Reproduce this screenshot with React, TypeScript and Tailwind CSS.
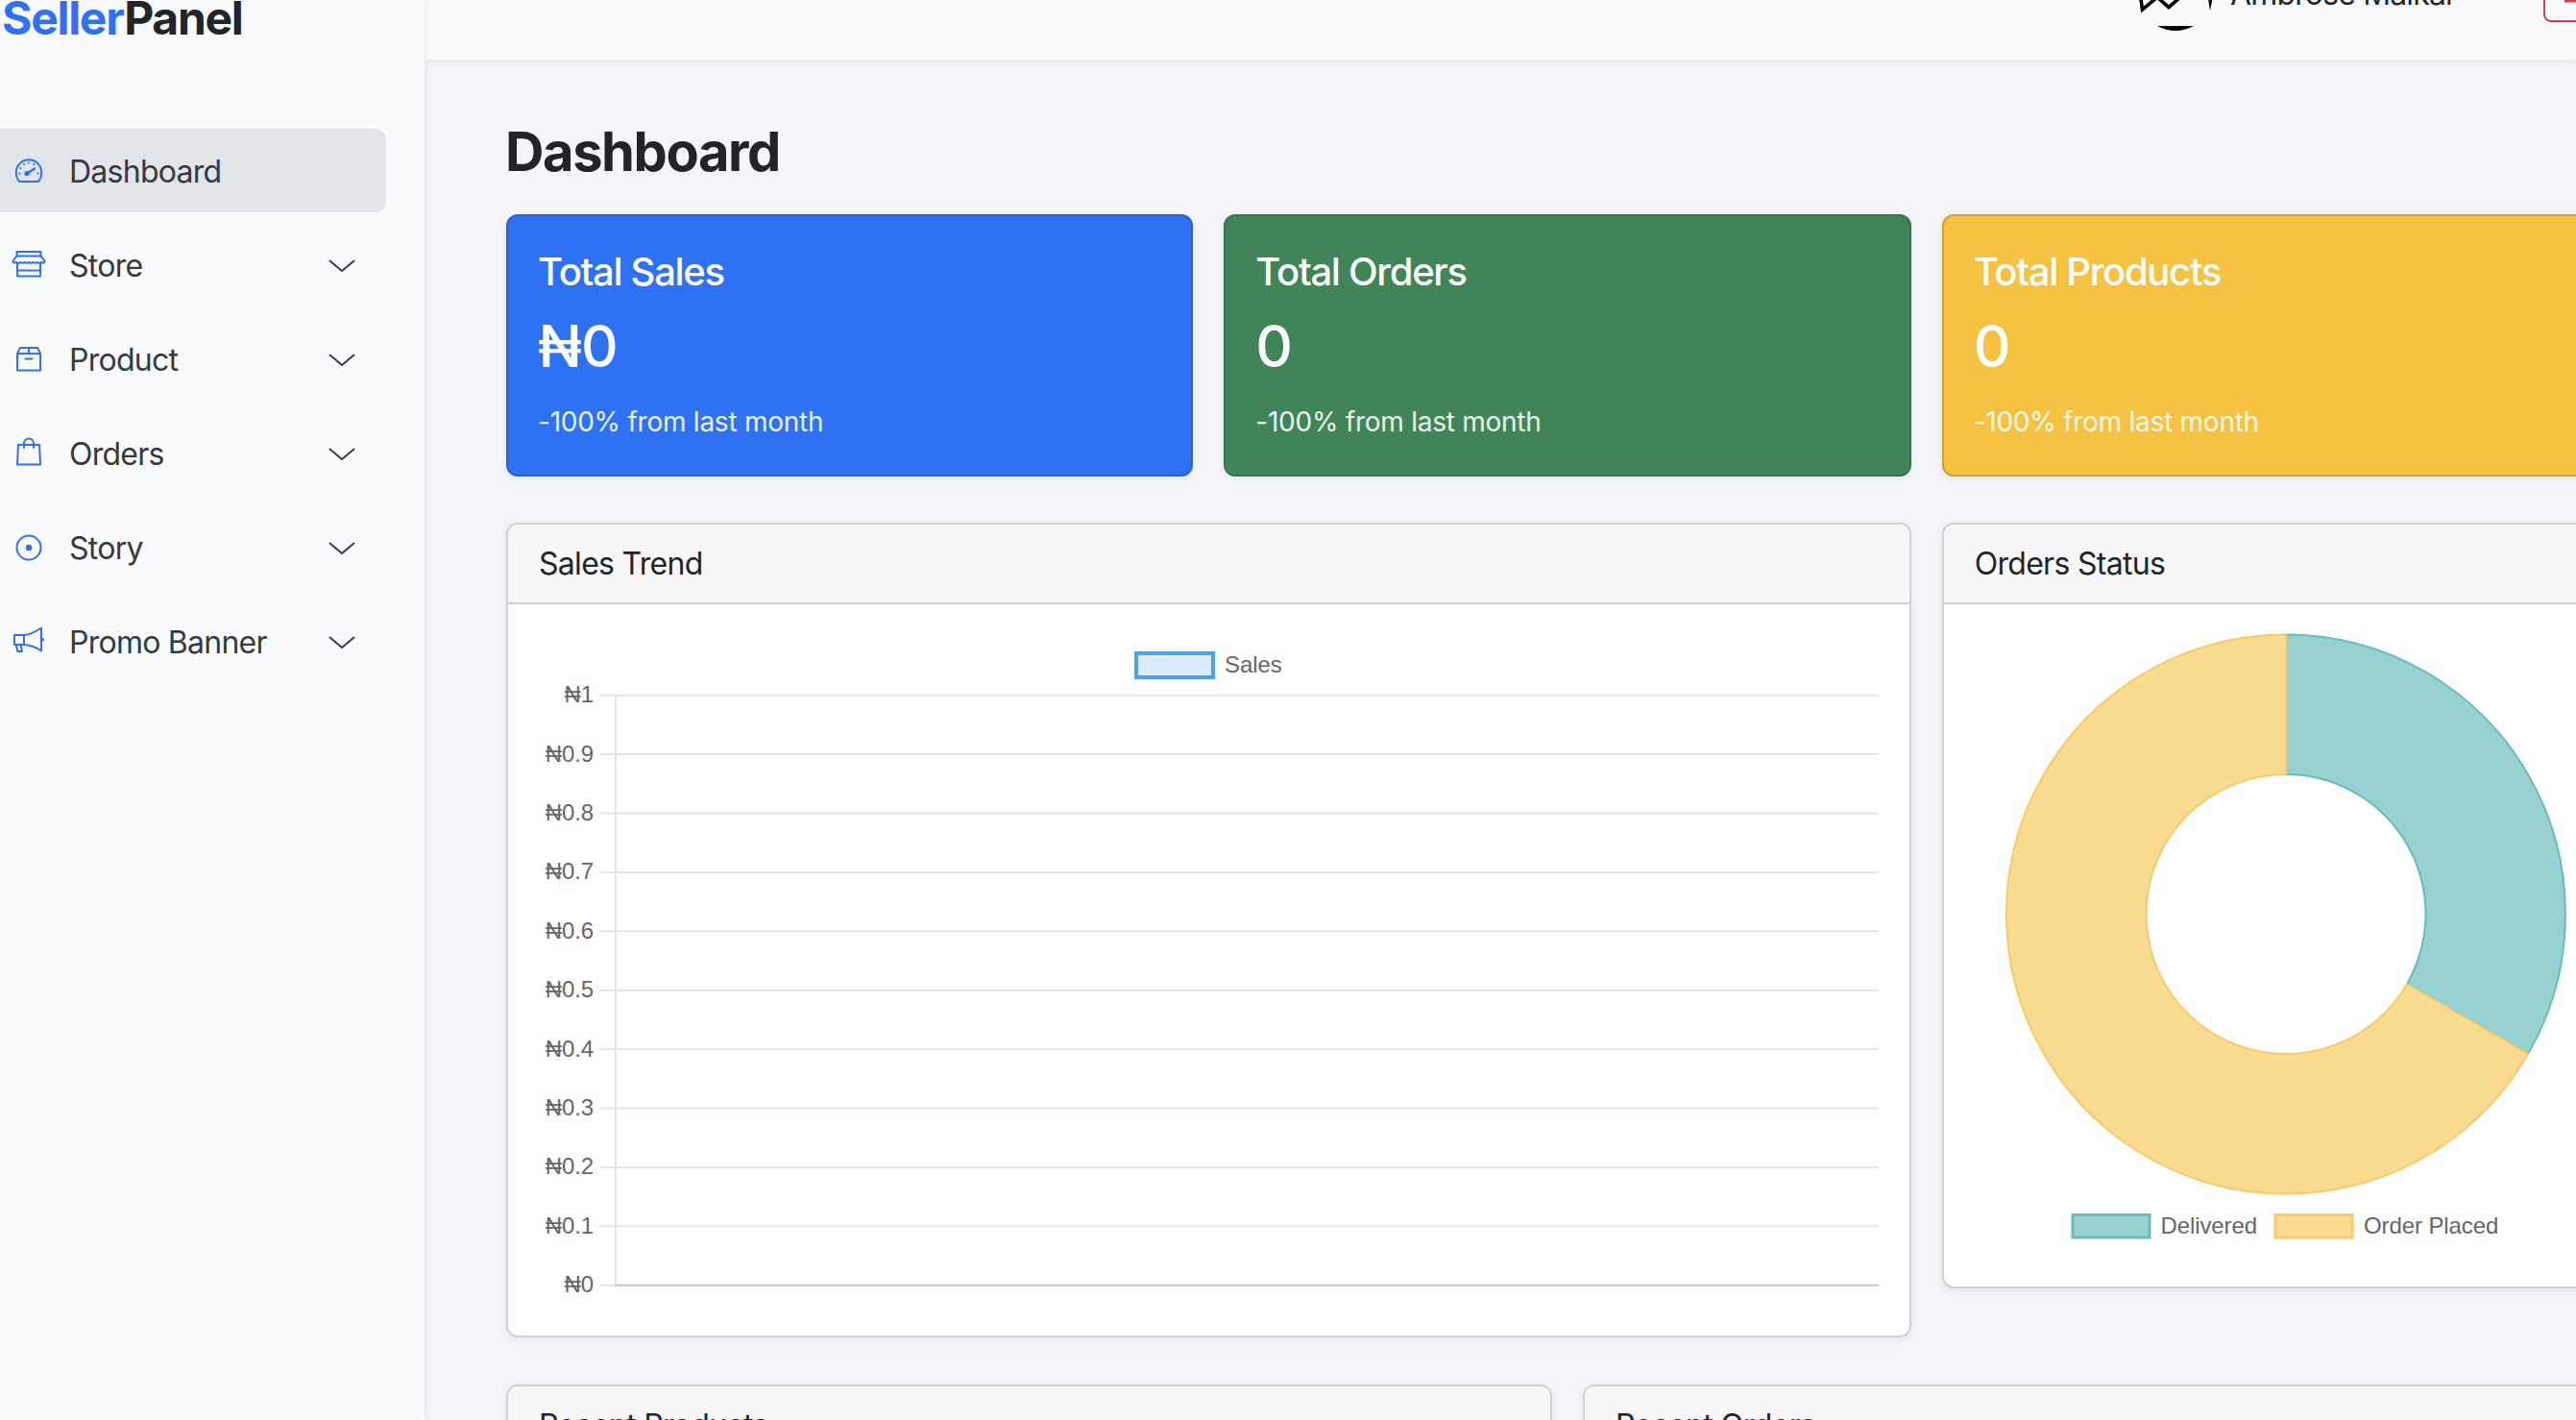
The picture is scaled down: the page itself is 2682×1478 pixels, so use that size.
import React from "react";

const S = { fill: "none", stroke: "#2f71f4", strokeWidth: 2, strokeLinejoin: "round" as const, strokeLinecap: "round" as const };

function Icon({ children }: { children: React.ReactNode }) {
  return (
    <svg viewBox="0 0 40 40" className="w-10 h-10 shrink-0 ml-[10px] mr-[22px]">
      {children}
    </svg>
  );
}

const GaugeIcon = () => (
  <Icon>
    <path {...S} d="M10.5 31 C7.8 28.5 6.8 25 6.8 21.5 A13.2 13.2 0 0 1 33.2 21.5 C33.2 25 32.2 28.5 29.5 31 Z" />
    <path {...S} strokeWidth={2.4} d="M18 22.5 L26 17.5" />
    <circle cx="18" cy="22.5" r="2.6" fill="#2f71f4" />
    {[[10.5, 22.5], [11.5, 17], [15, 13], [20, 11.5], [25.5, 13], [29.5, 22.5]].map(([x, y], i) => (
      <circle key={i} cx={x} cy={y} r="1.1" fill="#2f71f4" />
    ))}
  </Icon>
);
const StoreIcon = () => (
  <Icon>
    <path {...S} d="M7.5 11 V6 H32.5 V11" />
    <path {...S} d="M7.5 10.5 H32.5 L36.5 15.5 C36.5 18 34 18 33 16.8 C32 18 29.5 18 28.5 16.8 C27.5 18 25 18 24.2 16.8 C23.2 18 21 18 20 16.8 C19 18 16.8 18 15.8 16.8 C15 18 12.5 18 11.5 16.8 C10.5 18 8 18 7 16.8 C6 18 3.5 18 3.5 15.5 Z" />
    <path {...S} d="M8 18 V31.5 H32 V18 M8 25.5 H32" />
  </Icon>
);
const BoxIcon = () => (
  <Icon>
    <path {...S} d="M8 14 L11 8 H29 L32 14 V31.5 H8 Z M8 14 H32 M20 8 V14" />
    <path {...S} strokeWidth={2.2} d="M16.5 19.5 H23.5" />
  </Icon>
);
const BagIcon = () => (
  <Icon>
    <path {...S} d="M9 11 H31 L32 31.5 H8 Z" />
    <path {...S} d="M15 14 V9.5 A5 5 0 0 1 25 9.5 V14" />
  </Icon>
);
const RecordIcon = () => (
  <Icon>
    <circle {...S} cx="20" cy="20" r="12.5" />
    <circle cx="20" cy="20" r="3.2" fill="#2f71f4" />
  </Icon>
);
const MegaphoneIcon = () => (
  <Icon>
    <path {...S} d="M5 13 H15 V23 H5 Z" />
    <path {...S} d="M15 13 C22 12.5 28 9 33 5.5 V29.5 C28 26 22 23.5 15 23" />
    <circle cx="34.3" cy="17.8" r="1.8" fill="#2f71f4" />
    <path {...S} d="M6.5 23 L8.5 30 H13 L11.5 23" />
  </Icon>
);

const Chevron = () => (
  <svg viewBox="0 0 28 14" className="w-[28px] h-[14px] shrink-0">
    <path d="M1.5 1.5 L14 12 L26.5 1.5" fill="none" stroke="#343a40" strokeWidth="1.9" strokeLinecap="round" strokeLinejoin="round" />
  </svg>
);

const NAV: { label: string; icon: React.ReactNode; chevron: boolean }[] = [
  { label: "Dashboard", icon: <GaugeIcon />, chevron: false },
  { label: "Store", icon: <StoreIcon />, chevron: true },
  { label: "Product", icon: <BoxIcon />, chevron: true },
  { label: "Orders", icon: <BagIcon />, chevron: true },
  { label: "Story", icon: <RecordIcon />, chevron: true },
  { label: "Promo Banner", icon: <MegaphoneIcon />, chevron: true },
];

function Sidebar() {
  return (
    <aside className="w-[442px] shrink-0 h-full bg-[#f9fafc] shadow-[2px_0_6px_rgba(0,0,0,0.05)] relative z-10">
      <div className="-mt-[10px] pl-[2px] h-[144px] text-[48px] font-bold leading-[58px] tracking-[-1.3px] text-[#212529]">
        <span className="text-[#2f71f4]">Seller</span>Panel
      </div>
      <nav className="flex flex-col gap-[11px] w-[402px]">
        {NAV.map((n, i) => (
          <div
            key={n.label}
            className={
              i === 0
                ? "h-[87px] flex items-center rounded-r-[12px] bg-[#e2e5ea] text-[32px] tracking-[-0.75px] text-[#343a40]"
                : "h-[87px] flex items-center rounded-r-[12px] text-[32px] tracking-[-0.75px] text-[#343a40]"
            }
          >
            {n.icon}
            <span className="flex-1 mt-[3px]">{n.label}</span>
            {n.chevron && <span className="mr-[32px] mt-[3px] flex"><Chevron /></span>}
          </div>
        ))}
      </nav>
    </aside>
  );
}

function Avatar() {
  return (
    <svg viewBox="0 0 80 80" className="w-[80px] h-[80px] shrink-0">
      <path d="M23 75 L61 75 Q42 85 23 75 Z" fill="#000" />
      <path d="M5 40 L7.5 58 L22 46 M24 46 L35 55.5 L46 46" fill="none" stroke="#000" strokeWidth="3.6" />
      <path d="M75 40 L82 40 L78 59 Z" fill="#000" />
    </svg>
  );
}

function Header() {
  return (
    <header className="h-[140px] bg-[#f9fafc] shadow-[0_2px_8px_rgba(0,0,0,0.07)] flex items-center pl-[1781px] relative">
      <Avatar />
      <span className="ml-[19px] mt-[3px] text-[32px] tracking-[-0.85px] text-[#212529] whitespace-nowrap w-[326px] shrink-0">Ambrose Malkai</span>
      <button className="h-[62px] shrink-0 border-2 border-[#c94451] rounded-[8px] px-[18px] flex items-center gap-4 text-[28px] text-[#dc3545] whitespace-nowrap">
        <svg viewBox="0 0 28 28" className="w-[28px] h-[28px] shrink-0">
          <path d="M2 22 H26" stroke="#c94451" strokeWidth="5" />
        </svg>
        Logout
      </button>
    </header>
  );
}

function Stat({ title, value, bg }: { title: string; value: string; bg: string }) {
  return (
    <div className={bg + " h-[273px] rounded-[12px] border-2 pl-[31px] pt-[32px] text-white shadow-[0_2px_8px_rgba(0,0,0,0.08)]"}>
      <div className="text-[40px] font-medium leading-[48px] mt-[2px] tracking-[-1.3px]">{title}</div>
      <div className="text-[60px] font-medium leading-[72px] mt-[17px] tracking-[-1px]">{value}</div>
      <div className="text-[28px] leading-[42px] mt-[22px] tracking-[-0.25px] text-white/90">-100% from last month</div>
    </div>
  );
}

function Card({ title, className, children }: { title: string; className: string; children?: React.ReactNode }) {
  return (
    <div className={className + " rounded-[12px] border-2 border-[#d2d2d2] bg-white overflow-hidden shadow-[0_2px_8px_rgba(0,0,0,0.08)]"}>
      <div className="h-[83px] bg-[#f7f7f7] border-b-2 border-[#cfcfcf] pl-[32px] text-[32px] leading-[81px] tracking-[-0.7px] text-[#212529]">{title}</div>
      {children}
    </div>
  );
}

const TICKS = ["₦1", "₦0.9", "₦0.8", "₦0.7", "₦0.6", "₦0.5", "₦0.4", "₦0.3", "₦0.2", "₦0.1", "₦0"];
const chartText = "font-['Liberation_Sans',sans-serif] text-[24px] tracking-[-0.1px] fill-[#666666]";

function SalesChart() {
  return (
    <svg viewBox="529 629 1458 760" className="block w-[1458px] h-[760px]">
      <rect x="1183" y="680" width="80" height="25" fill="#dcebfb" stroke="#4fa2e6" strokeWidth="4" />
      <text x="1275" y="700" className={chartText}>Sales</text>
      {TICKS.map((t, i) => {
        const y = 723.7 + 61.4 * i;
        return (
          <g key={t}>
            <line x1="624.5" x2="1956" y1={y} y2={y} stroke="#e5e5e5" strokeWidth="2" />
            <text x="618" y={y + 7.5} textAnchor="end" className={chartText}>{t}</text>
          </g>
        );
      })}
      <line x1="641" x2="641" y1="724" y2="1338" stroke="#e5e5e5" strokeWidth="2" />
      <line x1="640" x2="1956" y1="1337.7" y2="1337.7" stroke="#c9c9c9" strokeWidth="2" />
    </svg>
  );
}

function OrdersChart() {
  const cx = 2380, cy = 951.5, R = 291, r = 145.5;
  const ox = cx + R * Math.sin((2 * Math.PI) / 3), oy = cy - R * Math.cos((2 * Math.PI) / 3);
  const ix = cx + r * Math.sin((2 * Math.PI) / 3), iy = cy - r * Math.cos((2 * Math.PI) / 3);
  const teal = `M${cx} ${cy - R} A${R} ${R} 0 0 1 ${ox} ${oy} L${ix} ${iy} A${r} ${r} 0 0 0 ${cx} ${cy - r} Z`;
  const yellow = `M${ox} ${oy} A${R} ${R} 0 1 1 ${cx} ${cy - R} L${cx} ${cy - r} A${r} ${r} 0 1 0 ${ix} ${iy} Z`;
  return (
    <svg viewBox="2024 629 713 710" className="block w-[713px] h-[710px]">
      <path d={teal} fill="#97d1d0" stroke="#69bcbc" strokeWidth="2" />
      <path d={yellow} fill="#f9db92" stroke="#f7cb66" strokeWidth="2" />
      <rect x="2158" y="1264.5" width="80" height="23.5" fill="#97d1d0" stroke="#69bcbc" strokeWidth="3" />
      <text x="2249.5" y="1283.5" className={chartText}>Delivered</text>
      <rect x="2369" y="1264.5" width="80" height="23.5" fill="#f9db92" stroke="#f7cb66" strokeWidth="3" />
      <text x="2461" y="1283.5" className={chartText}>Order Placed</text>
    </svg>
  );
}

export default function App() {
  return (
    <div className="w-[2682px] h-[1478px] overflow-hidden flex bg-[#f4f6fa] font-['Inter',sans-serif]">
      <Sidebar />
      <main className="w-[2240px] shrink-0 -mt-[78px]">
        <Header />
        <div className="pl-[85px] w-[2295px]">
          <h1 className="text-[56px] font-bold leading-[67px] mt-[63px] mb-[31px] -ml-[1px] tracking-[-1.4px] text-[#212529]">Dashboard</h1>
          <div className="grid grid-cols-3 gap-x-[32px] w-[2210px]">
            <Stat title="Total Sales" value="₦0" bg="bg-[#2e71f3] border-[#2a62cc]" />
            <Stat title="Total Orders" value="0" bg="bg-[#408558] border-[#38744d]" />
            <Stat title="Total Products" value="0" bg="bg-[#f5c242] border-[#cca33c]" />
          </div>
          <div className="grid grid-cols-3 gap-x-[32px] w-[2210px] mt-[48px] items-start">
            <Card title="Sales Trend" className="col-span-2 h-[848px]"><SalesChart /></Card>
            <Card title="Orders Status" className="h-[797px]"><OrdersChart /></Card>
          </div>
          <div className="grid grid-cols-2 gap-x-[32px] w-[2210px] mt-[49px]">
            <Card title="Recent Products" className="h-[200px]" />
            <Card title="Recent Orders" className="h-[200px]" />
          </div>
        </div>
      </main>
    </div>
  );
}
